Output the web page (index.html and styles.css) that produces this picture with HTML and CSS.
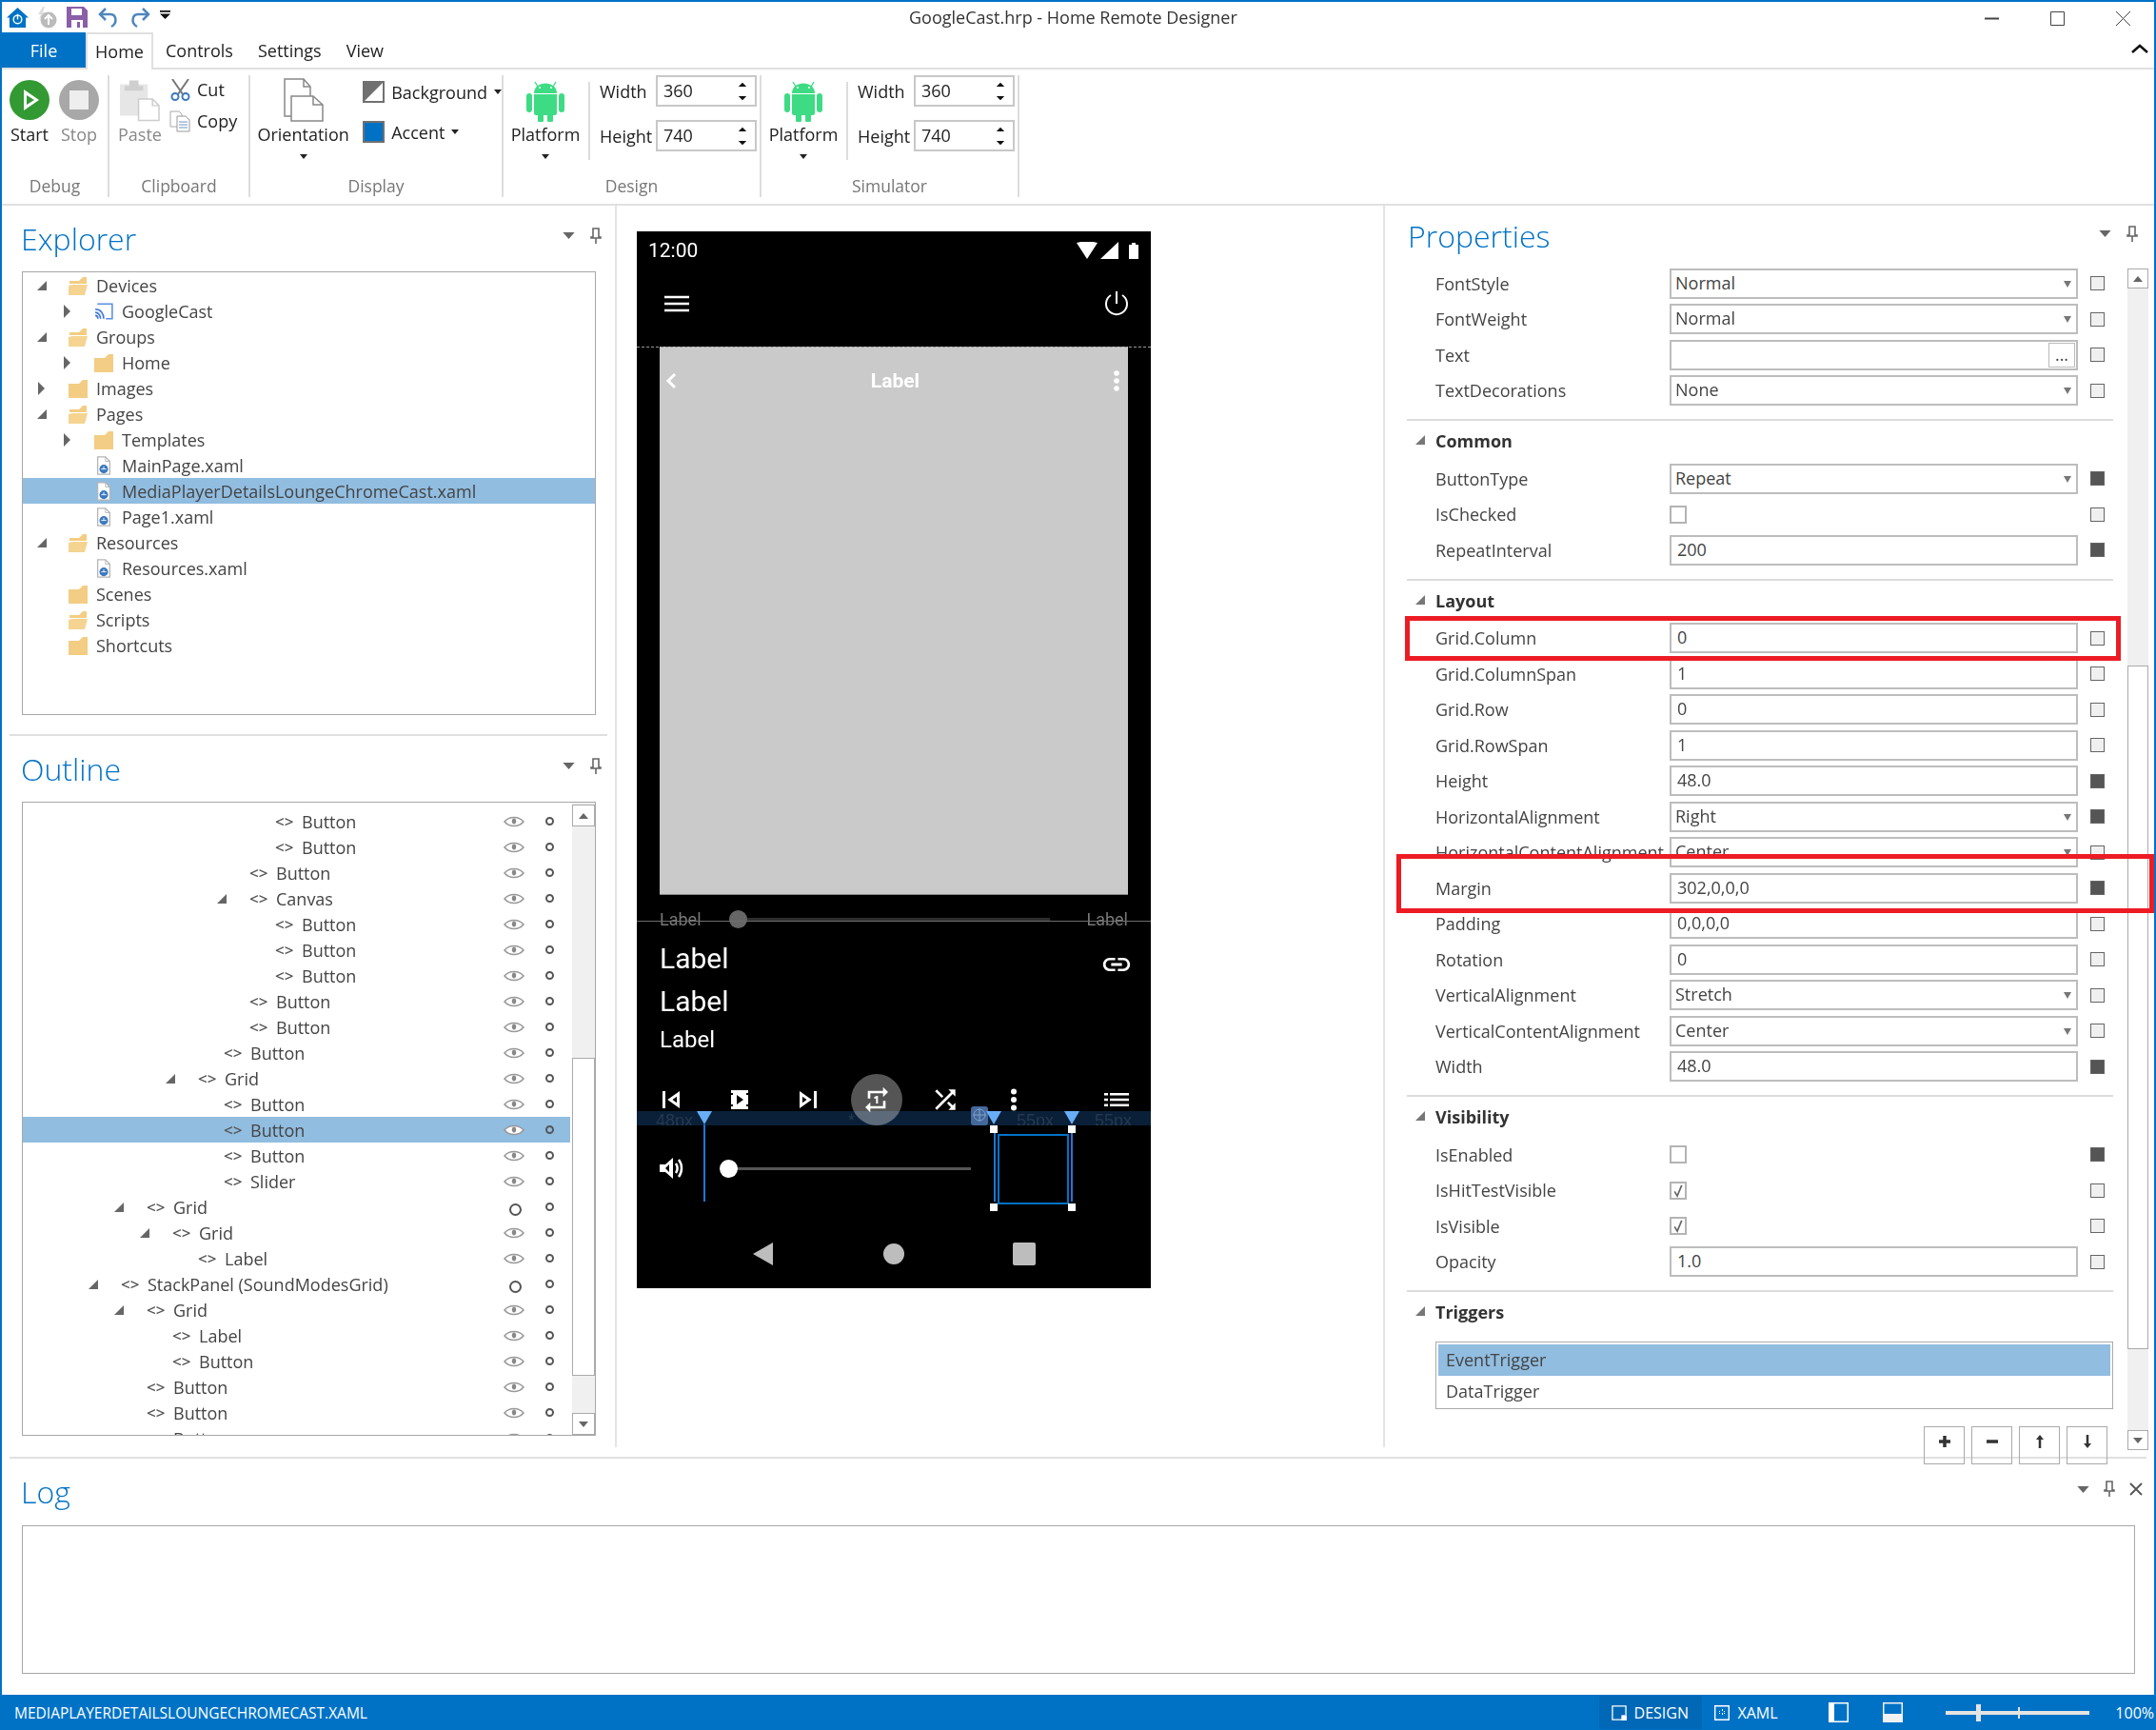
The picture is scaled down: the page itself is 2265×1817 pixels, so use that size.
FILE: index.html
```html
<!DOCTYPE html>
<html lang="en">
<head>
    <meta charset="UTF-8">
    <title>GoogleCast.hrp - Home Remote Designer</title>
    <link rel="stylesheet" href="styles.css">
</head>
<body>
<svg class="sprite" xmlns="http://www.w3.org/2000/svg">
    <symbol id="folder" viewBox="0 0 20 20"><path d="M0 5h11l4-4h5v19H0z" fill="#f2cd83"/></symbol>
    <symbol id="folder-open" viewBox="0 0 20 20"><path d="M1 5h10l4-4h4v7H1z" fill="#f2cd83"/><path d="M0 20V10l4-1h16l-3 11z" fill="#f5d491"/></symbol>
    <symbol id="xaml" viewBox="0 0 16 22"><path d="M1 1h9l5 5v15H1z" fill="#fff" stroke="#b5b5b5" stroke-width="1.4"/><path d="M10 1v5h5" fill="none" stroke="#b5b5b5"/><circle cx="8" cy="15" r="5" fill="#3b78c0"/><path d="M5 15h6M8 12v3" stroke="#fff"/></symbol>
    <symbol id="cast" viewBox="0 0 18 16"><path d="M3 1h14v14h-6" fill="none" stroke="#5a8fe0" stroke-width="1.4"/><path d="M1 6c5 0 8 4 8 9M1 9c3 0 5 3 5 6M1 12c2 0 2.500 1 2.500 3" fill="none" stroke="#3f78e0" stroke-width="1.5"/></symbol>
    <symbol id="eye" viewBox="0 0 22 12"><path d="M1 6c5-6 15-6 20 0-5 6-15 6-20 0z" fill="#fff" stroke="#999" stroke-width="1.6"/><path d="M11 2.500c3 0 3 6 0 6s-3-6 0-6z" fill="#888"/></symbol>
    <symbol id="android" viewBox="0 0 40 46"><path d="M9 4l3 5M31 4l-3 5" stroke="#3ddc84" stroke-width="1.4"/><path d="M8 16c0-14 24-14 24 0z" fill="#3ddc84"/><path d="M8 17h24v20a2 2 0 0 1-2 2h-2v5a3 3 0 0 1-6 0v-5h-4v5a3 3 0 0 1-6 0v-5h-2a2 2 0 0 1-2-2z" fill="#3ddc84"/><rect x="0" y="16" width="6" height="20" rx="3" fill="#3ddc84"/><rect x="34" y="16" width="6" height="20" rx="3" fill="#3ddc84"/><circle cx="14" cy="10" r="1" fill="#fff"/><circle cx="26" cy="10" r="1" fill="#fff"/></symbol>
    <symbol id="spin" viewBox="0 0 12 26"><path d="M6 2l5 5H1zM6 24l5-5H1z" fill="#111"/></symbol>
    <symbol id="pin" viewBox="0 0 12 18"><path d="M3 1h6v9h2v1H1v-1h2zM6 11v6" fill="none" stroke="#666" stroke-width="1.6"/></symbol>
    <symbol id="drop" viewBox="0 0 14 8"><path d="M0 0h14L7 8z" fill="#666"/></symbol>
    <symbol id="tick" viewBox="0 0 12 16"><path d="M2 9l3 5 5-12" fill="none" stroke="#666" stroke-width="1.8"/></symbol>
</svg>

<div class="app">
    <header class="titlebar">
        <div class="quick">
            <svg class="q-home" viewBox="0 0 24 22"><path d="M12 0l12 11h-3v11H3V11H0z" fill="#0072c6"/><circle cx="12" cy="13" r="4.500" fill="none" stroke="#fff" stroke-width="1.500"/><path d="M12 7v6" stroke="#fff" stroke-width="1.500"/></svg>
            <svg class="q-up" viewBox="0 0 24 24"><path d="M8 1L3 9h3l-2 5 7-7H8l2-6z" fill="#ddd"/><circle cx="14" cy="15" r="8.500" fill="#bbb"/><path d="M14 20v-9M10 14l4-4 4 4" fill="none" stroke="#fff" stroke-width="2"/></svg>
            <svg class="q-save" viewBox="0 0 22 22"><path d="M0 0h18l4 4v18H0z" fill="#8a5ea8"/><path d="M5 2h11v7H5z" fill="#fff"/><path d="M5 14h12v8H5z" fill="#fff"/><path d="M11 16h3v6h-3z" fill="#8a5ea8"/></svg>
            <svg class="q-arrow" viewBox="0 0 24 24"><path d="M9 3L3 9l6 6" fill="none" stroke="#4f86bd" stroke-width="2.500"/><path d="M4 9h10c6 0 8 9 1 13" fill="none" stroke="#4f86bd" stroke-width="2.500"/></svg>
            <svg class="q-arrow" viewBox="0 0 24 24"><path d="M15 3l6 6-6 6" fill="none" stroke="#4f86bd" stroke-width="2.500"/><path d="M20 9H10C4 9 2 18 9 22" fill="none" stroke="#4f86bd" stroke-width="2.500"/></svg>
            <svg class="q-more" viewBox="0 0 10 8"><path d="M0 0h10v1.500H0zM0 3h10L5 8z" fill="#111"/></svg>
        </div>
        <div class="title">GoogleCast.hrp - Home Remote Designer</div>
        <div class="winbtns">
            <svg viewBox="0 0 15 15"><path d="M0 7.500h15" stroke="#444" stroke-width="2"/></svg>
            <svg viewBox="0 0 15 15"><path d="M.5.5h14v14H.5z" fill="none" stroke="#444"/></svg>
            <svg viewBox="0 0 15 15"><path d="M0 0l15 15M15 0L0 15" stroke="#444"/></svg>
        </div>
    </header>

    <nav class="tabs">
        <div class="tab file">File</div>
        <div class="tab active">Home</div>
        <div class="tab">Controls</div>
        <div class="tab">Settings</div>
        <div class="tab">View</div>
        <svg class="collapse" viewBox="0 0 18 11"><path d="M1 9l8-7 8 7" fill="none" stroke="#111" stroke-width="2.500"/></svg>
    </nav>

    <section class="ribbon">
        <div class="group g-debug">
            <div class="group-body">
                <div class="big big-start">
                    <svg class="ic-run" viewBox="0 0 42 42"><circle cx="21" cy="21" r="21" fill="#339933"/><path d="M15 10l16 11-16 11z" fill="#fff"/><path d="M18 16l8 5-8 5z" fill="#339933"/></svg>
                    <span>Start</span>
                </div>
                <div class="big big-stop off">
                    <svg class="ic-run" viewBox="0 0 42 42"><circle cx="21" cy="21" r="21" fill="#a8a8a8"/><rect x="11" y="11" width="20" height="20" fill="#eee"/></svg>
                    <span>Stop</span>
                </div>
            </div>
            <div class="group-label">Debug</div>
        </div>
        <div class="group g-clip">
            <div class="group-body">
                <div class="big big-paste off">
                    <svg class="ic-big" viewBox="0 0 43 46"><path d="M0 6h30v34H0z" fill="#e6e6e6"/><path d="M10 2h10v6h5v5H5V8h5z" fill="#cfcfcf"/><path d="M20 22h15l7 7v16H20z" fill="#fff" stroke="#ccc" stroke-width="1.500"/><path d="M35 22v7h7" fill="none" stroke="#ccc" stroke-width="1.500"/></svg>
                    <span>Paste</span>
                </div>
                <div class="smalls">
                    <div class="small">
                        <svg class="ic-small" viewBox="0 0 23 23"><path d="M3 0l11 16M20 0L9 16" stroke="#777" stroke-width="2"/><circle cx="6" cy="18.500" r="3.500" fill="none" stroke="#3b78c0" stroke-width="2"/><circle cx="17" cy="18.500" r="3.500" fill="none" stroke="#3b78c0" stroke-width="2"/></svg>
                        <span>Cut</span>
                    </div>
                    <div class="small">
                        <svg class="ic-small" viewBox="0 0 23 23"><path d="M1 1h9l3 3v13H1z" fill="#fff" stroke="#aaa"/><path d="M8 6h9l4 4v12H8z" fill="#fff" stroke="#999"/><path d="M10 12h9M10 15h9M10 18h9" stroke="#6d93c4"/></svg>
                        <span>Copy</span>
                    </div>
                </div>
            </div>
            <div class="group-label">Clipboard</div>
        </div>
        <div class="group g-display">
            <div class="group-body">
                <div class="big big-orient">
                    <svg class="ic-big" viewBox="0 0 42 46"><path d="M1 1h20l7 8v31H1z" fill="#fff" stroke="#888" stroke-width="1.500"/><path d="M21 1v8h7" fill="none" stroke="#888" stroke-width="1.500"/><path d="M8 19h23l10 9v17H8z" fill="#fff" stroke="#888" stroke-width="1.500"/><path d="M31 19v9h10" fill="none" stroke="#888" stroke-width="1.500"/></svg>
                    <span>Orientation</span>
                    <i class="caret"></i>
                </div>
                <div class="swatches">
                    <div class="swatch-row">
                        <svg class="swatch" viewBox="0 0 23 23"><path d="M0 0h23v23H0z" fill="#fff"/><path d="M0 0h23L0 23z" fill="#707070"/><path d="M1 1h21v21H1z" fill="none" stroke="#707070" stroke-width="2"/></svg>
                        <span>Background</span><i class="caret inline"></i>
                    </div>
                    <div class="swatch-row">
                        <svg class="swatch" viewBox="0 0 23 23"><path d="M0 0h23v23H0z" fill="#0072c6"/><path d="M1 1h21v21H1z" fill="none" stroke="#707070" stroke-width="2"/></svg>
                        <span>Accent</span><i class="caret inline"></i>
                    </div>
                </div>
            </div>
            <div class="group-label">Display</div>
        </div>
        <div class="group g-size">
            <div class="group-body">
                <div class="big big-platform">
                    <svg class="ic-big"><use href="#android"/></svg>
                    <span>Platform</span>
                    <i class="caret"></i>
                </div>
                <div class="vsep"></div>
                <div class="size-grid">
                    <span>Width</span><div class="spinbox">360<svg><use href="#spin"/></svg></div>
                    <span>Height</span><div class="spinbox">740<svg><use href="#spin"/></svg></div>
                </div>
            </div>
            <div class="group-label">Design</div>
        </div>
        <div class="group g-size">
            <div class="group-body">
                <div class="big big-platform">
                    <svg class="ic-big"><use href="#android"/></svg>
                    <span>Platform</span>
                    <i class="caret"></i>
                </div>
                <div class="vsep"></div>
                <div class="size-grid">
                    <span>Width</span><div class="spinbox">360<svg><use href="#spin"/></svg></div>
                    <span>Height</span><div class="spinbox">740<svg><use href="#spin"/></svg></div>
                </div>
            </div>
            <div class="group-label">Simulator</div>
        </div>
    </section>

    <main class="workspace">
        <aside class="col-left">
            <div class="pane pane-explorer">
                <div class="pane-head">
                    <h2>Explorer</h2>
                    <div class="pane-tools"><svg class="t-drop"><use href="#drop"/></svg><svg class="t-pin"><use href="#pin"/></svg></div>
                </div>
                <div class="treebox explorer">
                    <div class="row lv0"><i class="exp open"></i><svg class="ic"><use href="#folder-open"/></svg><span>Devices</span></div>
                    <div class="row lv1"><i class="exp shut"></i><svg class="ic"><use href="#cast"/></svg><span>GoogleCast</span></div>
                    <div class="row lv0"><i class="exp open"></i><svg class="ic"><use href="#folder-open"/></svg><span>Groups</span></div>
                    <div class="row lv1"><i class="exp shut"></i><svg class="ic"><use href="#folder"/></svg><span>Home</span></div>
                    <div class="row lv0"><i class="exp shut"></i><svg class="ic"><use href="#folder"/></svg><span>Images</span></div>
                    <div class="row lv0"><i class="exp open"></i><svg class="ic"><use href="#folder-open"/></svg><span>Pages</span></div>
                    <div class="row lv1"><i class="exp shut"></i><svg class="ic"><use href="#folder"/></svg><span>Templates</span></div>
                    <div class="row lv1"><i class="exp"></i><svg class="ic"><use href="#xaml"/></svg><span>MainPage.xaml</span></div>
                    <div class="row lv1 selected"><i class="exp"></i><svg class="ic"><use href="#xaml"/></svg><span>MediaPlayerDetailsLoungeChromeCast.xaml</span></div>
                    <div class="row lv1"><i class="exp"></i><svg class="ic"><use href="#xaml"/></svg><span>Page1.xaml</span></div>
                    <div class="row lv0"><i class="exp open"></i><svg class="ic"><use href="#folder-open"/></svg><span>Resources</span></div>
                    <div class="row lv1"><i class="exp"></i><svg class="ic"><use href="#xaml"/></svg><span>Resources.xaml</span></div>
                    <div class="row lv0"><i class="exp"></i><svg class="ic"><use href="#folder"/></svg><span>Scenes</span></div>
                    <div class="row lv0"><i class="exp"></i><svg class="ic"><use href="#folder-open"/></svg><span>Scripts</span></div>
                    <div class="row lv0"><i class="exp"></i><svg class="ic"><use href="#folder"/></svg><span>Shortcuts</span></div>
                </div>
            </div>
            <hr class="rule">
            <div class="pane pane-outline">
                <div class="pane-head">
                    <h2>Outline</h2>
                    <div class="pane-tools"><svg class="t-drop"><use href="#drop"/></svg><svg class="t-pin"><use href="#pin"/></svg></div>
                </div>
                <div class="treebox outline">
                    <div class="outline-rows">
                        <div class="node l6"><i class="exp"></i><b>&lt;&gt;</b><span>Button</span><svg class="eye"><use href="#eye"/></svg><u></u></div>
                        <div class="node l6"><i class="exp"></i><b>&lt;&gt;</b><span>Button</span><svg class="eye"><use href="#eye"/></svg><u></u></div>
                        <div class="node l5"><i class="exp"></i><b>&lt;&gt;</b><span>Button</span><svg class="eye"><use href="#eye"/></svg><u></u></div>
                        <div class="node l5"><i class="exp open"></i><b>&lt;&gt;</b><span>Canvas</span><svg class="eye"><use href="#eye"/></svg><u></u></div>
                        <div class="node l6"><i class="exp"></i><b>&lt;&gt;</b><span>Button</span><svg class="eye"><use href="#eye"/></svg><u></u></div>
                        <div class="node l6"><i class="exp"></i><b>&lt;&gt;</b><span>Button</span><svg class="eye"><use href="#eye"/></svg><u></u></div>
                        <div class="node l6"><i class="exp"></i><b>&lt;&gt;</b><span>Button</span><svg class="eye"><use href="#eye"/></svg><u></u></div>
                        <div class="node l5"><i class="exp"></i><b>&lt;&gt;</b><span>Button</span><svg class="eye"><use href="#eye"/></svg><u></u></div>
                        <div class="node l5"><i class="exp"></i><b>&lt;&gt;</b><span>Button</span><svg class="eye"><use href="#eye"/></svg><u></u></div>
                        <div class="node l4"><i class="exp"></i><b>&lt;&gt;</b><span>Button</span><svg class="eye"><use href="#eye"/></svg><u></u></div>
                        <div class="node l3"><i class="exp open"></i><b>&lt;&gt;</b><span>Grid</span><svg class="eye"><use href="#eye"/></svg><u></u></div>
                        <div class="node l4"><i class="exp"></i><b>&lt;&gt;</b><span>Button</span><svg class="eye"><use href="#eye"/></svg><u></u></div>
                        <div class="node l4 selected"><i class="exp"></i><b>&lt;&gt;</b><span>Button</span><svg class="eye"><use href="#eye"/></svg><u></u></div>
                        <div class="node l4"><i class="exp"></i><b>&lt;&gt;</b><span>Button</span><svg class="eye"><use href="#eye"/></svg><u></u></div>
                        <div class="node l4"><i class="exp"></i><b>&lt;&gt;</b><span>Slider</span><svg class="eye"><use href="#eye"/></svg><u></u></div>
                        <div class="node l1"><i class="exp open"></i><b>&lt;&gt;</b><span>Grid</span><em></em><u></u></div>
                        <div class="node l2"><i class="exp open"></i><b>&lt;&gt;</b><span>Grid</span><svg class="eye"><use href="#eye"/></svg><u></u></div>
                        <div class="node l3"><i class="exp"></i><b>&lt;&gt;</b><span>Label</span><svg class="eye"><use href="#eye"/></svg><u></u></div>
                        <div class="node l0"><i class="exp open"></i><b>&lt;&gt;</b><span>StackPanel (SoundModesGrid)</span><em></em><u></u></div>
                        <div class="node l1"><i class="exp open"></i><b>&lt;&gt;</b><span>Grid</span><svg class="eye"><use href="#eye"/></svg><u></u></div>
                        <div class="node l2"><i class="exp"></i><b>&lt;&gt;</b><span>Label</span><svg class="eye"><use href="#eye"/></svg><u></u></div>
                        <div class="node l2"><i class="exp"></i><b>&lt;&gt;</b><span>Button</span><svg class="eye"><use href="#eye"/></svg><u></u></div>
                        <div class="node l1"><i class="exp"></i><b>&lt;&gt;</b><span>Button</span><svg class="eye"><use href="#eye"/></svg><u></u></div>
                        <div class="node l1"><i class="exp"></i><b>&lt;&gt;</b><span>Button</span><svg class="eye"><use href="#eye"/></svg><u></u></div>
                        <div class="node l1"><i class="exp"></i><b>&lt;&gt;</b><span>Button</span><svg class="eye"><use href="#eye"/></svg><u></u></div>
                    </div>
                    <div class="scrollbar sb-outline">
                        <div class="sb-btn up"></div>
                        <div class="sb-thumb"></div>
                        <div class="sb-btn down"></div>
                    </div>
                </div>
            </div>
        </aside>

        <section class="col-center">
            <div class="phone">
                <div class="status">
                    <span>12:00</span>
                    <svg class="status-ic" viewBox="0 0 66 18"><path d="M0 1c7-2 15-2 22 0L11 18z" fill="#fff"/><path d="M25 18L44 0v18z" fill="#fff"/><path d="M55 3h3V1h4v2h3v15H55z" fill="#fff"/></svg>
                </div>
                <div class="appbar">
                    <svg class="menu" viewBox="0 0 26 18"><path d="M0 2h26M0 9h26M0 16h26" stroke="#fff" stroke-width="2.500"/></svg>
                    <svg class="power" viewBox="0 0 26 26"><path d="M7 4a11 11 0 1 0 12 0" fill="none" stroke="#fff" stroke-width="2"/><path d="M13 0v13" stroke="#fff" stroke-width="2"/></svg>
                </div>
                <div class="art">
                    <div class="art-top">
                        <svg class="chev" viewBox="0 0 12 18"><path d="M10 2L3 9l7 7" fill="none" stroke="#fff" stroke-width="3"/></svg>
                        <span>Label</span>
                        <svg class="kebab" viewBox="0 0 6 22"><circle cx="3" cy="3" r="2.800" fill="#fff"/><circle cx="3" cy="11" r="2.800" fill="#fff"/><circle cx="3" cy="19" r="2.800" fill="#fff"/></svg>
                    </div>
                </div>
                <div class="seek">
                    <span>Label</span>
                    <div class="seek-track"><i></i></div>
                    <span>Label</span>
                </div>
                <div class="labels">
                    <div class="label-stack">
                        <div class="lb-big">Label</div>
                        <div class="lb-big">Label</div>
                        <div class="lb-mid">Label</div>
                    </div>
                    <svg class="link" viewBox="0 0 24 24"><path d="M3.900 12c0-1.710 1.390-3.100 3.100-3.100h4V7H7c-2.760 0-5 2.240-5 5s2.240 5 5 5h4v-1.900H7c-1.710 0-3.100-1.390-3.100-3.100zM8 13h8v-2H8v2zm9-6h-4v1.900h4c1.710 0 3.100 1.390 3.100 3.100s-1.390 3.100-3.100 3.100h-4V17h4c2.760 0 5-2.240 5-5s-2.240-5-5-5z" fill="#fff"/></svg>
                </div>
                <div class="controls">
                    <div class="ctl"><svg class="ic36" viewBox="0 0 24 24"><path d="M6 6h2v12H6V6zm3.500 6l8.500 6V6l-8.500 6zm6.500 2.140L12.970 12 16 9.860v4.280z" fill="#fff"/></svg></div>
                    <div class="ctl"><svg class="ic-mid" viewBox="0 0 18 20"><path d="M0 0h18v20H0z" fill="#fff"/><path d="M6 5l7 5-7 5z" fill="#000"/><path d="M0 3h2v2H0zM0 15h2v2H0zM16 3h2v2h-2zM16 15h2v2h-2z" fill="#000"/></svg></div>
                    <div class="ctl"><svg class="ic36" viewBox="0 0 24 24"><path d="M6 18l8.500-6L6 6v12zM8 9.860L11.030 12 8 14.140V9.860zM16 6h2v12h-2z" fill="#fff"/></svg></div>
                    <div class="ctl"><div class="repeat"><svg class="ic32" viewBox="0 0 24 24"><path d="M7 7h10v3l4-4-4-4v3H5v6h2V7zm10 10H7v-3l-4 4 4 4v-3h12v-6h-2v4zm-4-2V9h-1l-2 1v1h1.500v4H13z" fill="#fff"/></svg></div></div>
                    <div class="ctl"><svg class="ic32" viewBox="0 0 24 24"><path d="M10.590 9.170L5.410 4 4 5.410l5.170 5.170 1.420-1.410zM14.500 4l2.040 2.040L4 18.590 5.410 20 17.960 7.460 20 9.500V4h-5.500zm.33 9.410l-1.410 1.410 3.130 3.130L14.500 20H20v-5.500l-2.040 2.040-3.130-3.130z" fill="#fff"/></svg></div>
                    <div class="ctl"><svg class="ic-dots" viewBox="0 0 8 24"><circle cx="4" cy="3.500" r="3" fill="#fff"/><circle cx="4" cy="12" r="3" fill="#fff"/><circle cx="4" cy="20.500" r="3" fill="#fff"/></svg></div>
                    <div class="ctl ctl-list"><svg class="ic-list" viewBox="0 0 26 16"><path d="M0 1h4v2.500H0zM0 6.800h4v2.500H0zM0 12.500h4V15H0zM6 1h20v2.500H6zM6 6.800h20v2.500H6zM6 12.500h20V15H6z" fill="#fff"/></svg></div>
                </div>
                <div class="volume">
                    <div class="ctl"><svg class="ic-vol" viewBox="0 0 26 26"><path d="M1 9h6l8-7v22l-8-7H1z" fill="#fff"/><path d="M11 9v8l-4-4z" fill="#000"/><path d="M18 8c2 3 2 7 0 10M21 4c4 5 4 13 0 18" fill="none" stroke="#fff" stroke-width="2.500"/></svg></div>
                    <div class="vol-track"><i></i></div>
                </div>
                <div class="navbar">
                    <div class="nav-back"></div>
                    <div class="nav-home"></div>
                    <div class="nav-recent"></div>
                </div>

                <!-- designer adorners, drawn over the running page -->
                <div class="ad-dash"></div>
                <div class="ad-line"></div>
                <div class="ad-band">
                    <span class="b48">48px</span><span class="bstar">*</span><span class="b55a">55px</span><span class="b55b">55px</span>
                </div>
                <div class="ad-move"><svg viewBox="0 0 18 18"><circle cx="9" cy="9" r="6" fill="none" stroke="#7fa2cc"/><path d="M9 2v14M2 9h14" stroke="#7fa2cc"/></svg></div>
                <i class="ad-tri t1"></i><i class="ad-tri t2"></i><i class="ad-tri t3"></i>
                <div class="ad-vline v1"></div>
                <div class="ad-vline v2"></div>
                <div class="ad-vline v3"></div>
                <div class="ad-select"></div>
                <i class="ad-handle h1"></i><i class="ad-handle h2"></i><i class="ad-handle h3"></i><i class="ad-handle h4"></i>
            </div>
        </section>

        <aside class="col-right">
            <div class="pane-head props-head">
                <h2>Properties</h2>
                <div class="pane-tools"><svg class="t-drop"><use href="#drop"/></svg><svg class="t-pin"><use href="#pin"/></svg></div>
            </div>
            <div class="props-wrap">
                <div class="props">
                    <div class="prop-group">
                        <div class="prop"><label>FontStyle</label><div class="field select">Normal</div><i class="mark"></i></div>
                        <div class="prop"><label>FontWeight</label><div class="field select">Normal</div><i class="mark"></i></div>
                        <div class="prop"><label>Text</label><div class="field"><span class="dots">...</span></div><i class="mark"></i></div>
                        <div class="prop"><label>TextDecorations</label><div class="field select">None</div><i class="mark"></i></div>
                    </div>
                    <div class="prop-group">
                        <h3>Common</h3>
                        <div class="prop"><label>ButtonType</label><div class="field select">Repeat</div><i class="mark on"></i></div>
                        <div class="prop"><label>IsChecked</label><div class="check"></div><i class="mark"></i></div>
                        <div class="prop"><label>RepeatInterval</label><div class="field num">200</div><i class="mark on"></i></div>
                    </div>
                    <div class="prop-group">
                        <h3>Layout</h3>
                        <div class="prop boxed-a"><label>Grid.Column</label><div class="field num">0</div><i class="mark"></i></div>
                        <div class="prop"><label>Grid.ColumnSpan</label><div class="field num">1</div><i class="mark"></i></div>
                        <div class="prop"><label>Grid.Row</label><div class="field num">0</div><i class="mark"></i></div>
                        <div class="prop"><label>Grid.RowSpan</label><div class="field num">1</div><i class="mark"></i></div>
                        <div class="prop"><label>Height</label><div class="field num">48.0</div><i class="mark on"></i></div>
                        <div class="prop"><label>HorizontalAlignment</label><div class="field select">Right</div><i class="mark on"></i></div>
                        <div class="prop"><label>HorizontalContentAlignment</label><div class="field select">Center</div><i class="mark"></i></div>
                        <div class="prop boxed-b"><label>Margin</label><div class="field num">302,0,0,0</div><i class="mark on"></i></div>
                        <div class="prop"><label>Padding</label><div class="field num">0,0,0,0</div><i class="mark"></i></div>
                        <div class="prop"><label>Rotation</label><div class="field num">0</div><i class="mark"></i></div>
                        <div class="prop"><label>VerticalAlignment</label><div class="field select">Stretch</div><i class="mark"></i></div>
                        <div class="prop"><label>VerticalContentAlignment</label><div class="field select">Center</div><i class="mark"></i></div>
                        <div class="prop"><label>Width</label><div class="field num">48.0</div><i class="mark on"></i></div>
                    </div>
                    <div class="prop-group">
                        <h3>Visibility</h3>
                        <div class="prop"><label>IsEnabled</label><div class="check"></div><i class="mark on"></i></div>
                        <div class="prop"><label>IsHitTestVisible</label><div class="check"><svg><use href="#tick"/></svg></div><i class="mark"></i></div>
                        <div class="prop"><label>IsVisible</label><div class="check"><svg><use href="#tick"/></svg></div><i class="mark"></i></div>
                        <div class="prop"><label>Opacity</label><div class="field num">1.0</div><i class="mark"></i></div>
                    </div>
                    <div class="prop-group last">
                        <h3>Triggers</h3>
                        <div class="trigger-list">
                            <div class="trigger selected">EventTrigger</div>
                            <div class="trigger">DataTrigger</div>
                        </div>
                        <div class="trigger-btns">
                            <div class="tbtn"><svg viewBox="0 0 14 14"><path d="M7 1v12M1 7h12" stroke="#333" stroke-width="3.500"/></svg></div>
                            <div class="tbtn"><svg viewBox="0 0 14 14"><path d="M1 7h12" stroke="#333" stroke-width="3.500"/></svg></div>
                            <div class="tbtn"><svg viewBox="0 0 14 14"><path d="M7 14V4" stroke="#333" stroke-width="2.500"/><path d="M7 0l4 5H3z" fill="#333"/></svg></div>
                            <div class="tbtn"><svg viewBox="0 0 14 14"><path d="M7 0v10" stroke="#333" stroke-width="2.500"/><path d="M7 14l4-5H3z" fill="#333"/></svg></div>
                        </div>
                    </div>
                </div>
                <div class="scrollbar sb-props">
                    <div class="sb-btn up"></div>
                    <div class="sb-thumb"></div>
                    <div class="sb-btn down"></div>
                </div>
            </div>
        </aside>
    </main>

    <hr class="rule rule-wide">

    <section class="log">
        <div class="pane-head">
            <h2>Log</h2>
            <div class="pane-tools log-tools">
                <svg class="t-drop"><use href="#drop"/></svg><svg class="t-pin"><use href="#pin"/></svg>
                <svg class="t-close" viewBox="0 0 14 14"><path d="M1 1l12 12M13 1L1 13" stroke="#555" stroke-width="1.800"/></svg>
            </div>
        </div>
        <div class="logbox"></div>
    </section>

    <footer class="statusbar">
        <span class="doc">MEDIAPLAYERDETAILSLOUNGECHROMECAST.XAML</span>
        <div class="view-btn active">
            <svg viewBox="0 0 17 17"><path d="M12 16H1V1h15v10" fill="none" stroke="#fff" stroke-width="1.400"/><path d="M11 11h6v6h-6z" fill="#fff"/></svg>
            DESIGN
        </div>
        <div class="view-btn">
            <svg viewBox="0 0 16 16"><path d="M.7.7h14.600v14.600H.7z" fill="none" stroke="#fff" stroke-width="1.400"/><path d="M5 6h1v1H5zM10 6h1v1h-1zM8 4h1v2H8zM8 8h1v2H8zM5 8h1v1H5zM10 8h1v1h-1z" fill="#fff"/></svg>
            XAML
        </div>
        <svg class="layout-ic ic-a" viewBox="0 0 21 21"><path d="M0 0h21v21H0z" fill="#fff"/><path d="M6 1.500h13.500v18H6z" fill="#0072c6"/></svg>
        <svg class="layout-ic ic-b" viewBox="0 0 21 21"><path d="M0 0h21v21H0z" fill="#f2f2f2"/><path d="M1.500 1.500h18V12h-18z" fill="#0072c6"/></svg>
        <div class="zoom"><i class="thumb"></i><i class="tick"></i></div>
        <span class="pct">100%</span>
    </footer>
</div>
</body>
</html>
```

FILE: styles.css
```css
* { box-sizing: border-box; }

html, body {
    margin: 0;
    padding: 0;
    background: #fff;
}

body {
    width: 2265px;
    height: 1817px;
    overflow: hidden;
    font-family: "Open Sans", "Noto Sans", sans-serif;
    font-size: 18px;
    color: #222;
}

.sprite { display: none; }

.app {
    width: 2265px;
    height: 1817px;
    display: flex;
    flex-direction: column;
    border-top: 2px solid #0072c6;
    border-left: 2px solid #0072c6;
    border-right: 2px solid #0072c6;
    background: #fff;
}

/* title bar */
.titlebar {
    height: 32px;
    display: flex;
    align-items: center;
    position: relative;
}

.quick {
    display: flex;
    align-items: center;
    padding-left: 5px;
}

.q-home { width: 23px; height: 21px; margin-right: 7px; }
.q-up { width: 24px; height: 24px; margin-right: 9px; }
.q-save { width: 22px; height: 22px; margin-right: 10px; }
.q-arrow { width: 24px; height: 24px; margin-right: 9px; }
.q-more { width: 11px; height: 9px; margin-left: 0; margin-top: -6px; }

.title {
    position: absolute;
    left: 953px;
    top: 2px;
    line-height: 28px;
    color: #333;
}

.winbtns {
    margin-left: auto;
    display: flex;
    gap: 54px;
    padding-right: 25px;
    padding-top: 2px;
}

.winbtns svg { width: 15px; height: 15px; }

/* tabs */
.tabs {
    height: 39px;
    display: flex;
    align-items: stretch;
    border-bottom: 2px solid #e0e0e0;
    position: relative;
}

.tab {
    padding: 0 13px;
    line-height: 38px;
    color: #222;
}

.tab.file {
    width: 88px;
    padding: 0;
    text-align: center;
    color: #fff;
    background: #0072c6;
}

.tab.active {
    width: 71px;
    padding: 0;
    text-align: center;
    margin-right: 0;
    background: #fff;
    height: 39px;
    border: 2px solid #e0e0e0;
    border-bottom: none;
    line-height: 36px;
}

.collapse {
    width: 18px;
    height: 11px;
    margin-left: auto;
    margin-right: 6px;
    margin-top: 12px;
}

/* ribbon */
.ribbon {
    height: 143px;
    display: flex;
    padding-top: 6px;
    border-bottom: 2px solid #e0e0e0;
}

.group {
    height: 128px;
    display: flex;
    flex-direction: column;
    border-right: 2px solid #ddd;
}

.g-debug { width: 113px; }
.g-clip { width: 148px; }
.g-display { width: 266px; }
.g-size { width: 271px; }

.group-body {
    flex: 1;
    display: flex;
    padding-top: 3px;
}

.group-label {
    height: 22px;
    line-height: 20px;
    text-align: center;
    color: #777;
    font-size: 17.500px;
}

.big {
    display: flex;
    flex-direction: column;
    align-items: center;
    line-height: 26px;
}

.big.off span { color: #888; }

.big-start { width: 52px; margin-left: 3px; }
.big-stop { width: 52px; }
.big-paste { width: 62px; margin-left: 1px; }
.big-orient { width: 104px; margin-left: 4px; }
.big-platform { width: 84px; margin-left: 2px; }

.ic-run { width: 42px; height: 42px; margin: 2px 0 2px; }
.ic-big { width: 42px; height: 46px; }

.caret {
    display: block;
    width: 0;
    height: 0;
    margin-top: 8px;
    border-left: 4px solid transparent;
    border-right: 4px solid transparent;
    border-top: 5px solid #222;
}

.caret.inline { margin: 0 0 0 7px; }

.smalls {
    display: flex;
    flex-direction: column;
    gap: 11px;
    padding-top: 1px;
}

.small {
    display: flex;
    align-items: center;
    gap: 6px;
    height: 22px;
}

.ic-small { width: 23px; height: 23px; }

.swatches {
    display: flex;
    flex-direction: column;
    gap: 19px;
    margin-left: 11px;
    padding-top: 3px;
}

.swatch-row {
    display: flex;
    align-items: center;
    height: 23px;
}

.swatch { width: 23px; height: 23px; margin-right: 7px; }

.vsep {
    width: 2px;
    height: 82px;
    margin: 4px 0 0 3px;
    background: #ddd;
}

.size-grid {
    display: grid;
    grid-template-columns: 59px 106px;
    grid-auto-rows: 33px;
    row-gap: 14px;
    align-items: center;
    margin-left: 10px;
    margin-top: -3px;
}

.spinbox {
    height: 33px;
    border: 2px solid #c8c8c8;
    padding-left: 6px;
    line-height: 29px;
    position: relative;
}

.spinbox svg {
    position: absolute;
    right: 8px;
    top: 3px;
    width: 10px;
    height: 24px;
}

/* main area */
.workspace {
    height: 1314px;
    display: flex;
}

.col-left {
    width: 646px;
    height: 1304px;
    border-right: 2px solid #e4e4e4;
}

.col-center {
    width: 805px;
    padding: 27px 0 0 21px;
}

.col-right {
    width: 810px;
    height: 1304px;
    border-left: 2px solid #e4e4e4;
    position: relative;
}

.pane-head {
    height: 71px;
    display: flex;
    align-items: center;
    position: relative;
}

.pane-head h2 {
    margin: 0 0 0 20px;
    font-size: 32px;
    font-weight: 300;
    color: #0072c6;
    line-height: 40px;
}

.pane-tools {
    margin-left: auto;
    display: flex;
    align-items: center;
    gap: 16px;
    padding-right: 14px;
    margin-top: -6px;
}

.t-drop { width: 13px; height: 7px; }
.t-pin { width: 12px; height: 18px; }
.t-close { width: 14px; height: 14px; }

.rule {
    margin: 0 8px;
    border: none;
    height: 2px;
    background: #e0e0e0;
}

.pane-explorer { height: 555px; }
.pane-explorer .pane-head { height: 69px; }
.pane-outline .pane-head { height: 69px; }

.treebox {
    margin-left: 21px;
    width: 603px;
    border: 2px solid #a8a8a8;
    border-width: 1.500px;
    color: #444;
}

.explorer { height: 466px; }

.row {
    height: 27px;
    display: flex;
    align-items: center;
    white-space: nowrap;
}

.row .ic { width: 20px; height: 20px; margin-right: 9px; }
.row.lv0 { padding-left: 12px; }
.row.lv1 { padding-left: 39px; }
.selected { background: #91bde0; }

.exp {
    display: block;
    flex: none;
    width: 16px;
    height: 14px;
    margin-right: 20px;
    position: relative;
}

.exp.open::before {
    content: "";
    position: absolute;
    left: 3px;
    top: 2px;
    border-bottom: 10px solid #666;
    border-left: 10px solid transparent;
}

.exp.shut::before {
    content: "";
    position: absolute;
    left: 4px;
    top: 0;
    border-left: 7px solid #666;
    border-top: 7px solid transparent;
    border-bottom: 7px solid transparent;
}

/* outline */
.outline {
    height: 666px;
    display: flex;
    overflow: hidden;
}

.outline-rows {
    width: 575px;
    padding-top: 6px;
}

.node {
    height: 27px;
    display: flex;
    align-items: center;
    white-space: nowrap;
    position: relative;
}

.node .exp { margin-right: 21px; }

.node b {
    width: 28px;
    flex: none;
    font-weight: 600;
    color: #555;
    font-size: 17px;
}

.l0 { padding-left: 66px; }
.l1 { padding-left: 93px; }
.l2 { padding-left: 120px; }
.l3 { padding-left: 147px; }
.l4 { padding-left: 174px; }
.l5 { padding-left: 201px; }
.l6 { padding-left: 228px; }

.eye, .node em {
    position: absolute;
    left: 505px;
    top: 8px;
    width: 22px;
    height: 12px;
}

.node em::after, .node u {
    content: "";
    position: absolute;
    width: 9px;
    height: 9px;
    border: 2px solid #555;
    border-radius: 50%;
}

.node em::after { left: 6px; top: 2px; }
.node u { left: 549px; top: 9px; }

.scrollbar {
    display: flex;
    flex-direction: column;
    background: #f0f0f0;
}

.sb-outline {
    width: 24px;
    margin-left: 2px;
    padding-top: 2px;
}

.sb-outline .sb-thumb {
    height: 334px;
    margin-top: 243px;
}

.sb-outline .sb-btn.down { margin-top: 39px; }

.sb-btn {
    height: 23px;
    background: #fff;
    border: 1.500px solid #aaa;
    position: relative;
}

.sb-btn::after {
    content: "";
    position: absolute;
    left: 50%;
    top: 50%;
    margin: -3px 0 0 -5px;
    border-left: 5px solid transparent;
    border-right: 5px solid transparent;
}

.sb-btn.up::after { border-bottom: 6px solid #666; }
.sb-btn.down::after { border-top: 6px solid #666; }

.sb-thumb {
    background: #fff;
    border: 1.500px solid #aaa;
}

/* phone */
.phone {
    width: 540px;
    height: 1110px;
    background: #000;
    color: #fff;
    font-family: Roboto, sans-serif;
    position: relative;
    display: flex;
    flex-direction: column;
    overflow: hidden;
}

.status {
    height: 37px;
    display: flex;
    align-items: center;
    justify-content: space-between;
    padding: 3px 12px 0;
    font-size: 21px;
}

.status-ic { width: 66px; height: 18px; }

.appbar {
    height: 84px;
    display: flex;
    align-items: center;
    justify-content: space-between;
    padding: 0 23px 6px 29px;
}

.menu { width: 26px; height: 18px; }
.power { width: 26px; height: 26px; }

.art {
    height: 576px;
    margin: 0 24px;
    background: #cacaca;
    border-bottom: 1px solid #888;
}

.art-top {
    height: 72px;
    display: flex;
    align-items: center;
    justify-content: space-between;
    padding: 0 9px 0 6px;
    font-size: 21px;
    font-weight: 700;
}

.chev { width: 12px; height: 18px; }
.kebab { width: 6px; height: 22px; }

.seek {
    height: 44px;
    display: flex;
    align-items: center;
    padding: 6px 24px 0;
    font-size: 18px;
    color: #777;
    gap: 38px;
}

.seek-track {
    flex: 1;
    height: 3px;
    background: #2e2e2e;
    position: relative;
}

.seek-track i {
    position: absolute;
    left: -9px;
    top: -8px;
    width: 19px;
    height: 19px;
    border-radius: 50%;
    background: #666;
}

.labels {
    height: 126px;
    display: flex;
    justify-content: space-between;
    padding: 0 19px 0 24px;
}

.lb-big { height: 45px; line-height: 45px; font-size: 30px; }
.lb-mid { height: 36px; line-height: 36px; font-size: 24px; }
.link { width: 34px; height: 34px; margin-top: 12px; }

.controls {
    height: 90px;
    display: flex;
    align-items: center;
}

.ctl {
    width: 72px;
    flex: none;
    display: flex;
    justify-content: center;
    align-items: center;
}

.ctl-list { margin-left: auto; }

.ic36 { width: 36px; height: 36px; }
.ic32 { width: 32px; height: 32px; }
.ic-mid { width: 18px; height: 20px; }
.ic-dots { width: 8px; height: 24px; }
.ic-list { width: 26px; height: 16px; }
.ic-vol { width: 26px; height: 26px; }

.repeat {
    width: 54px;
    height: 54px;
    border-radius: 50%;
    background: #555;
    display: flex;
    align-items: center;
    justify-content: center;
}

.volume {
    height: 54px;
    display: flex;
    align-items: center;
}

.vol-track {
    width: 255px;
    height: 3px;
    margin-left: 24px;
    background: #555;
    position: relative;
}

.vol-track i {
    position: absolute;
    left: -9px;
    top: -8px;
    width: 19px;
    height: 19px;
    border-radius: 50%;
    background: #fff;
}

.navbar {
    margin-top: auto;
    height: 72px;
    padding: 0 64px;
    display: grid;
    grid-template-columns: repeat(3, 1fr);
    align-items: center;
    justify-items: center;
}

.nav-back {
    width: 0;
    height: 0;
    border-right: 21px solid #bdbdbd;
    border-top: 12px solid transparent;
    border-bottom: 12px solid transparent;
}

.nav-home {
    width: 22px;
    height: 22px;
    border-radius: 50%;
    background: #bdbdbd;
}

.nav-recent {
    width: 24px;
    height: 24px;
    border-radius: 2px;
    background: #bdbdbd;
}

/* designer adorners */
.ad-dash {
    position: absolute;
    left: 0;
    right: 0;
    top: 121px;
    border-top: 1px dashed #999;
}

.ad-line {
    position: absolute;
    left: 0;
    right: 0;
    top: 724px;
    height: 1px;
    background: #6e6e6e;
}

.ad-band {
    position: absolute;
    left: 0;
    right: 0;
    top: 924px;
    height: 15px;
    overflow: hidden;
    background: #0a2038;
    mix-blend-mode: screen;
    font-size: 18px;
    line-height: 15px;
    color: #000;
}

.ad-band span {
    position: absolute;
    top: 3px;
    color: #25394f;
    font-family: "Liberation Sans", sans-serif;
}

.b48 { left: 20px; }
.bstar { left: 222px; }
.b55a { left: 399px; }
.b55b { left: 481px; }

.ad-move {
    position: absolute;
    left: 351px;
    top: 919px;
    width: 18px;
    height: 20px;
    border-radius: 3px;
    background: #44689a;
}

.ad-move svg { width: 18px; height: 18px; }

.ad-tri {
    position: absolute;
    top: 924px;
    width: 0;
    height: 0;
    border-left: 8px solid transparent;
    border-right: 8px solid transparent;
    border-top: 14px solid #68aef6;
}

.t1 { left: 63px; }
.t2 { left: 367px; }
.t3 { left: 449px; }

.ad-vline {
    position: absolute;
    width: 2px;
    background: #1a78d8;
}

.v1 { left: 70px; top: 938px; height: 81px; }
.v2 { left: 375px; top: 947px; height: 72px; }
.v3 { left: 456px; top: 947px; height: 72px; }

.ad-select {
    position: absolute;
    left: 379px;
    top: 948px;
    width: 75px;
    height: 74px;
    border: 2px solid #0072c6;
}

.ad-handle {
    position: absolute;
    width: 8px;
    height: 8px;
    background: #fff;
}

.h1 { left: 371px; top: 939px; }
.h2 { left: 453px; top: 939px; }
.h3 { left: 371px; top: 1021px; }
.h4 { left: 453px; top: 1021px; }

/* properties */
.props-head { height: 63px; }
.props-head h2 { margin-left: 24px; }
.props-head .pane-tools { padding-right: 17px; margin-top: -4px; }

.props-wrap {
    height: 1246px;
    display: flex;
    overflow: visible;
}

.props {
    width: 742px;
    margin-left: 23px;
    height: 1246px;
    overflow: visible;
}

.prop-group {
    border-bottom: 2px solid #dcdcdc;
    padding-bottom: 11px;
}

.prop-group.last {
    border-bottom: none;
    padding-bottom: 0;
    height: 204px;
    overflow: hidden;
}

.prop-group h3 {
    margin: 0;
    height: 42px;
    padding: 7px 0 0 30px;
    font-size: 18px;
    line-height: 28px;
    font-weight: 700;
    color: #333;
    position: relative;
}

.prop-group h3::before {
    content: "";
    position: absolute;
    left: 9px;
    top: 15px;
    border-bottom: 10px solid #777;
    border-left: 10px solid transparent;
}

.prop {
    height: 37.500px;
    display: grid;
    grid-template-columns: 246px 429px 15px;
    column-gap: 0;
    align-items: center;
    padding-left: 30px;
    position: relative;
    color: #444;
}

.prop label { white-space: nowrap; overflow: visible; }

.field {
    height: 32px;
    border: 2px solid #bdbdbd;
    background: #fff;
    padding-left: 4px;
    line-height: 27px;
    color: #444;
    position: relative;
    z-index: 1;
}

.field.num { padding-left: 6px; }

.field.select::after {
    content: "";
    position: absolute;
    right: 5px;
    top: 11px;
    border-left: 4px solid transparent;
    border-right: 4px solid transparent;
    border-top: 7px solid #777;
}

.dots {
    position: absolute;
    right: 1px;
    top: 1px;
    width: 28px;
    height: 26px;
    border: 1.500px solid #bbb;
    text-align: center;
    line-height: 22px;
}

.check {
    width: 18px;
    height: 19px;
    border: 2px solid #b4b4b4;
    background: #fff;
    display: flex;
    align-items: center;
    justify-content: center;
}

.check svg { width: 12px; height: 15px; }

.mark {
    display: block;
    width: 15px;
    height: 15px;
    margin-left: 13px;
    border: 1.500px solid #666;
    background: #f0f0f0;
}

.mark.on { background: #555; }

.prop { grid-template-columns: 246px 429px 28px; }

/* the two red boxes drawn on the screenshot */
.boxed-a::after, .boxed-b::after {
    content: "";
    position: absolute;
    border: 5px solid #ed1c24;
    z-index: 3;
}

.boxed-a::after { left: -2px; right: -8px; top: -5px; bottom: -5px; }
.boxed-b::after { left: -11px; right: -43px; top: -17px; bottom: -7px; }

.trigger-list {
    margin-left: 30px;
    margin-top: 10px;
    width: 712px;
    height: 71px;
    border: 1.500px solid #aaa;
    padding: 2px;
    color: #444;
}

.trigger {
    height: 33px;
    line-height: 33px;
    padding-left: 8px;
}

.trigger.selected { background: #91bde0; }

.trigger-btns {
    display: flex;
    gap: 7px;
    margin-top: 18px;
    padding-left: 543px;
}

.tbtn {
    width: 43px;
    height: 40px;
    border: 1.500px solid #aaa;
    display: flex;
    justify-content: center;
    padding-top: 7px;
}

.tbtn svg { width: 14px; height: 16px; }

.sb-props {
    width: 22px;
    height: 1241px;
    margin-left: 15px;
    margin-top: 3px;
}

.sb-props .sb-btn { height: 21px; }
.sb-props .sb-thumb { height: 718px; margin-top: 396px; }
.sb-props .sb-btn.down { margin-top: 85px; }

/* log */
.rule-wide { margin: 0 8px 0 8px; width: 2245px; }

.log { flex: 1; }

.log .pane-head { height: 70px; }

.log-tools { padding-right: 12px; gap: 15px; }

.logbox {
    margin-left: 21px;
    width: 2220px;
    height: 156px;
    border: 1.500px solid #a8a8a8;
}

/* status bar */
.statusbar {
    height: 37px;
    display: flex;
    align-items: center;
    background: #0072c6;
    color: #fff;
    font-size: 16px;
    position: relative;
}

.doc { margin-left: 13px; width: 1667px; font-size: 15.500px; white-space: nowrap; }

.view-btn {
    height: 35px;
    display: flex;
    align-items: center;
    gap: 8px;
    padding: 0 13px;
}

.view-btn.active { background: #0068b6; width: 109px; }
.view-btn svg { width: 16px; height: 16px; flex: none; }

.layout-ic { width: 21px; height: 21px; flex: none; }
.ic-a { margin-left: 40px; }
.ic-b { margin-left: 36px; }

.zoom {
    width: 152px;
    height: 4px;
    margin-left: 45px;
    background: #e4e4e4;
    position: relative;
}

.zoom .thumb { position: absolute; left: 32px; top: -7px; width: 5px; height: 18px; background: #e4e4e4; }
.zoom .tick { position: absolute; left: 76px; top: -4px; width: 2px; height: 12px; background: #e4e4e4; }

.pct { margin-left: 27px; }
```
